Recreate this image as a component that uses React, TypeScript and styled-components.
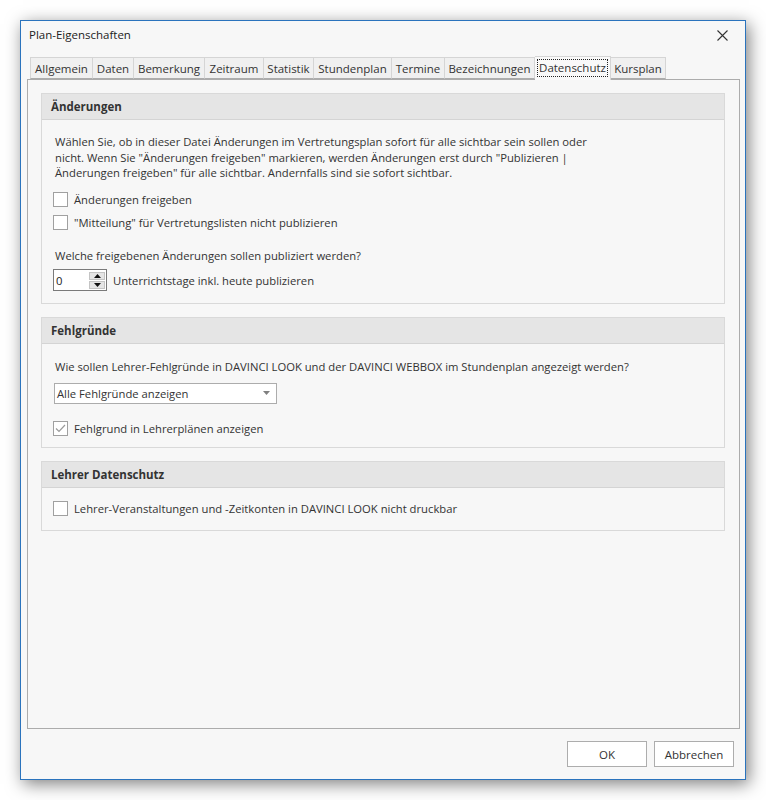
import React from "react";
import styled, { createGlobalStyle } from "styled-components";

const Global = createGlobalStyle`
  html, body { margin: 0; padding: 0; background: #ffffff; }
  body { font-family: "Open Sans", "Noto Sans", sans-serif; font-size: 11.25px; color: #333333; }
  * { box-sizing: border-box; }
`;

const Page = styled.div`
  width: 766px;
  height: 800px;
  padding: 20px 0 0 20px;
`;

const Window = styled.div`
  width: 726px;
  height: 760px;
  border: 1px solid #2a73bd;
  background: #f7f7f7;
  box-shadow: 3px 4px 16px rgba(0, 0, 0, 0.5);
  display: flex;
  flex-direction: column;
`;

const TitleBar = styled.div`
  height: 35px;
  display: flex;
  align-items: flex-start;
  justify-content: space-between;
  padding: 6px 16px 0 8px;
`;

const Title = styled.span`
  font-size: 11.5px;
  color: #222222;
  line-height: 16px;
`;

const CloseBtn = styled.div`
  width: 12px;
  height: 12px;
  margin-top: 3px;
  display: flex;
`;

const TabRow = styled.div`
  height: 23px;
  display: flex;
  align-items: flex-end;
  padding-left: 9px;
  position: relative;
  z-index: 1;
`;

const Tab = styled.div<{ $w: number; $active?: boolean }>`
  width: ${(p) => p.$w}px;
  height: ${(p) => (p.$active ? 24 : 22)}px;
  margin-bottom: ${(p) => (p.$active ? -1 : 0)}px;
  border: 1px solid #d5d5d5;
  border-left: none;
  border-bottom: ${(p) => (p.$active ? "none" : "1px solid #acacac")};
  background: ${(p) => (p.$active ? "#f9f9f9" : "#f0f0f0")};
  display: flex;
  align-items: center;
  justify-content: center;
  font-size: 11.5px;
  color: #333;
  white-space: nowrap;
  &:first-child { border-left: 1px solid #d5d5d5; }
`;

const FocusText = styled.span`
  outline: 1px dotted #222;
  padding: 0 1px;
  line-height: 16px;
  margin-top: -1px;
`;

const Panel = styled.div`
  flex: 1;
  margin: 0 5px 0 6px;
  border: 1px solid #acacac;
  background: #f7f7f7;
  padding: 13px 14px 0 13px;
  display: flex;
  flex-direction: column;
  gap: 13px;
`;

const Section = styled.div`
  border: 1px solid #d9d9d9;
`;

const SectionHeader = styled.div`
  height: 26px;
  background: #e5e5e5;
  border-bottom: 1px solid #d4d4d4;
  padding-left: 9px;
  display: flex;
  align-items: center;
  font-weight: 700;
  font-size: 11.5px;
  color: #333;
`;

const SectionBody = styled.div<{ $pt: number; $pb: number }>`
  padding: ${(p) => p.$pt}px 12px ${(p) => p.$pb}px 11px;
  display: flex;
  flex-direction: column;
  align-items: flex-start;
`;

const Para = styled.p<{ $mt?: number }>`
  margin: ${(p) => p.$mt ?? 0}px 0 0 2px;
  line-height: 15.5px;
  white-space: nowrap;
`;

const CheckRow = styled.label<{ $mt: number }>`
  margin-top: ${(p) => p.$mt}px;
  display: flex;
  align-items: center;
  gap: 6px;
  line-height: 15px;
`;

const Box = styled.span`
  width: 15px;
  height: 15px;
  border: 1px solid #a0a0a0;
  background: #ffffff;
  display: flex;
  align-items: center;
  justify-content: center;
`;

const SpinRow = styled.div`
  margin-top: 6px;
  display: flex;
  align-items: center;
  gap: 6px;
`;

const Spin = styled.div`
  width: 54px;
  height: 22px;
  border: 1px solid #7a7a7a;
  background: #fff;
  display: flex;
  align-items: center;
  justify-content: space-between;
  padding: 0 1px 0 2px;
`;

const SpinValue = styled.span`
  color: #222;
`;

const SpinButtons = styled.div`
  display: flex;
  flex-direction: column;
  gap: 1px;
`;

const SpinBtn = styled.div`
  width: 16px;
  height: 8px;
  background: #e5e5e5;
  border: 1px solid #c4c4c4;
  display: flex;
  align-items: center;
  justify-content: center;
`;

const Select = styled.div`
  margin-top: 8px;
  margin-left: 1px;
  width: 223px;
  height: 21px;
  border: 1px solid #acacac;
  background: #ffffff;
  display: flex;
  align-items: center;
  justify-content: space-between;
  padding: 0 6px 0 2px;
`;

const Footer = styled.div`
  height: 50px;
  display: flex;
  justify-content: flex-end;
  align-items: flex-start;
  gap: 7px;
  padding: 12px 11px 0 0;
`;

const Button = styled.button`
  width: 80px;
  height: 26px;
  border: 1px solid #adadad;
  background: #ffffff;
  font-family: inherit;
  font-size: 11.5px;
  color: #333;
  padding: 0;
`;

const Check = ({ checked }: { checked?: boolean }) => (
  <Box>
    {checked && (
      <svg width="11" height="9" viewBox="0 0 11 9">
        <path d="M1 4.5 L4 7.5 L10 1" fill="none" stroke="#9a9a9a" strokeWidth="1.2" />
      </svg>
    )}
  </Box>
);

const tabs: [string, number][] = [
  ["Allgemein", 63],
  ["Daten", 41],
  ["Bemerkung", 71],
  ["Zeitraum", 59],
  ["Statistik", 50],
  ["Stundenplan", 78],
  ["Termine", 53],
  ["Bezeichnungen", 90],
  ["Datenschutz", 76],
  ["Kursplan", 55],
];

export default function App() {
  return (
    <>
      <Global />
      <Page>
        <Window>
          <TitleBar>
            <Title>Plan-Eigenschaften</Title>
            <CloseBtn>
              <svg width="11" height="11" viewBox="0 0 11 11">
                <path d="M0.5 0.5 L10.5 10.5 M10.5 0.5 L0.5 10.5" stroke="#333" strokeWidth="1.1" />
              </svg>
            </CloseBtn>
          </TitleBar>
          <TabRow>
            {tabs.map(([name, w]) =>
              name === "Datenschutz" ? (
                <Tab key={name} $w={w} $active>
                  <FocusText>{name}</FocusText>
                </Tab>
              ) : (
                <Tab key={name} $w={w}>
                  {name}
                </Tab>
              )
            )}
          </TabRow>
          <Panel>
            <Section>
              <SectionHeader>Änderungen</SectionHeader>
              <SectionBody $pt={14} $pb={12}>
                <Para>
                  Wählen Sie, ob in dieser Datei Änderungen im Vertretungsplan sofort für alle sichtbar sein sollen oder
                  <br />
                  nicht. Wenn Sie "Änderungen freigeben" markieren, werden Änderungen erst durch "Publizieren |
                  <br />
                  Änderungen freigeben" für alle sichtbar. Andernfalls sind sie sofort sichtbar.
                </Para>
                <CheckRow $mt={11}>
                  <Check />
                  Änderungen freigeben
                </CheckRow>
                <CheckRow $mt={8}>
                  <Check />
                  "Mitteilung" für Vertretungslisten nicht publizieren
                </CheckRow>
                <Para $mt={18}>Welche freigebenen Änderungen sollen publiziert werden?</Para>
                <SpinRow>
                  <Spin>
                    <SpinValue>0</SpinValue>
                    <SpinButtons>
                      <SpinBtn>
                        <svg width="7" height="4" viewBox="0 0 7 4">
                          <path d="M3.5 0 L7 4 L0 4 Z" fill="#111" />
                        </svg>
                      </SpinBtn>
                      <SpinBtn>
                        <svg width="7" height="4" viewBox="0 0 7 4">
                          <path d="M0 0 L7 0 L3.5 4 Z" fill="#111" />
                        </svg>
                      </SpinBtn>
                    </SpinButtons>
                  </Spin>
                  Unterrichtstage inkl. heute publizieren
                </SpinRow>
              </SectionBody>
            </Section>
            <Section>
              <SectionHeader>Fehlgründe</SectionHeader>
              <SectionBody $pt={15} $pb={11}>
                <Para>Wie sollen Lehrer-Fehlgründe in DAVINCI LOOK und der DAVINCI WEBBOX im Stundenplan angezeigt werden?</Para>
                <Select>
                  <span>Alle Fehlgründe anzeigen</span>
                  <svg width="7" height="4" viewBox="0 0 7 4">
                    <path d="M0 0 L7 0 L3.5 4 Z" fill="#808080" />
                  </svg>
                </Select>
                <CheckRow $mt={17}>
                  <Check checked />
                  Fehlgrund in Lehrerplänen anzeigen
                </CheckRow>
              </SectionBody>
            </Section>
            <Section>
              <SectionHeader>Lehrer Datenschutz</SectionHeader>
              <SectionBody $pt={13} $pb={14}>
                <CheckRow $mt={0}>
                  <Check />
                  Lehrer-Veranstaltungen und -Zeitkonten in DAVINCI LOOK nicht druckbar
                </CheckRow>
              </SectionBody>
            </Section>
          </Panel>
          <Footer>
            <Button>OK</Button>
            <Button>Abbrechen</Button>
          </Footer>
        </Window>
      </Page>
    </>
  );
}
